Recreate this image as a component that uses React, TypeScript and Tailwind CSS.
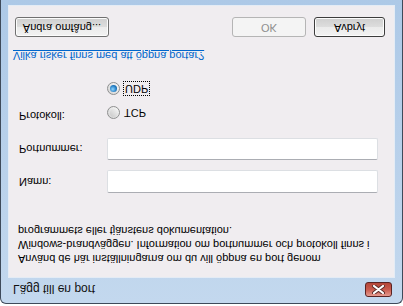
import React from "react";

const font = { fontFamily: '"Liberation Sans", Arial, sans-serif' };

const Radio = ({ checked }: { checked?: boolean }) => (
  <span className="relative w-[13px] h-[13px] rounded-full border border-[#8e8f8f] bg-gradient-to-br from-[#d4d4d4] to-[#f8f8f8] flex items-center justify-center">
    {checked ? (
      <span className="w-[7px] h-[7px] rounded-full bg-[radial-gradient(circle_at_40%_40%,#8fd6ff,#1e78c0_60%,#0e4f8a)]" />
    ) : (
      <span className="w-[8px] h-[8px] rounded-full bg-gradient-to-br from-[#c8c8c8] to-[#f4f4f4]" />
    )}
  </span>
);

const VButton = ({
  children,
  w,
  disabled,
  def,
}: {
  children: React.ReactNode;
  w: string;
  disabled?: boolean;
  def?: boolean;
}) => (
  <div
    className={`${w} h-[20px] rounded-[3px] border flex items-center justify-center text-[11px] ${
      disabled
        ? "border-[#b5b5b5] bg-[#f4f4f4] text-[#8d8d8d]"
        : def
        ? "border-[#3c3c3c] bg-[linear-gradient(#f2f2f2_0%,#ebebeb_50%,#dddddd_50%,#cfcfcf_100%)] text-black shadow-[inset_0_0_0_1px_#fcfcfc]"
        : "border-[#707070] bg-[linear-gradient(#f2f2f2_0%,#ebebeb_50%,#dddddd_50%,#cfcfcf_100%)] text-black shadow-[inset_0_0_0_1px_#fcfcfc]"
    }`}
  >
    {children}
  </div>
);

export default function App() {
  return (
    <div className="w-[403px] h-[306px] overflow-hidden bg-white [transform:scaleY(-1)]" style={font}>
      <div className="mt-[2px] h-[304px] rounded-t-[6px] border-x border-t border-[#3e4a5a] bg-gradient-to-b from-[#c3d8ee] to-[#adc9e7] flex flex-col px-[7px] pb-[5px]">
        {/* title bar */}
        <div className="h-[25px] flex items-center justify-between pl-[5px] pr-[3px] pt-[3px]">
          <span className="text-[12px] text-[#111]">Lägg till en port</span>
          <div className="w-[27px] h-[15px] rounded-[3px] border border-[#5a2323] bg-gradient-to-b from-[#e49a8f] via-[#c95a4d] to-[#b24638] flex items-center justify-center mb-[1px]">
            <svg width="13" height="9" viewBox="0 0 13 9">
              <path d="M2 1 L11 8 M11 1 L2 8" stroke="#5b2b28" strokeWidth="4" strokeLinecap="round" />
              <path d="M2 1 L11 8 M11 1 L2 8" stroke="#fff" strokeWidth="2.2" strokeLinecap="round" />
            </svg>
          </div>
        </div>

        {/* content */}
        <div className="flex-1 bg-[#f0edf0] border border-[#e4ecf5] flex flex-col pl-[9px] pr-[16px] text-[11px] text-black">
          <div className="pt-[11px] leading-[14px]">
            <p>Använd de här inställningarna om du vill öppna en port genom</p>
            <p>Windows-brandväggen. Information om portnummer och protokoll finns i</p>
            <p>programmets eller tjänstens dokumentation.</p>
          </div>

          <div className="mt-[31px] flex items-center h-[23px]">
            <span className="w-[89px] pl-[1px]">Namn:</span>
            <div className="flex-1 h-[23px] bg-white border border-[#dcdfe3] border-t-[#abadb3] rounded-[2px]" />
          </div>

          <div className="mt-[10px] flex items-center h-[22px]">
            <span className="w-[89px] pl-[1px]">Portnummer:</span>
            <div className="flex-1 h-[22px] bg-white border border-[#dcdfe3] border-t-[#abadb3] rounded-[2px]" />
          </div>

          <div className="mt-[13px] flex">
            <span className="w-[89px] pl-[1px] pt-[1px]">Protokoll:</span>
            <div className="flex flex-col">
              <div className="h-[24px] flex items-center gap-[4px]">
                <Radio />
                <span>TCP</span>
              </div>
              <div className="h-[24px] flex items-center gap-[3px]">
                <Radio checked />
                <span className="border border-dotted border-black px-[1px] leading-[13px]">UDP</span>
              </div>
            </div>
          </div>

          <div className="mt-[13px] ml-[-5px]">
            <span className="text-[#0066cc] underline">Vilka risker finns med att öppna portar?</span>
          </div>

          <div className="mt-[10px] flex items-center">
            <div className="ml-[-3px]">
              <VButton w="w-[94px]">Ändra omfång...</VButton>
            </div>
            <div className="ml-auto flex gap-[8px] mr-[-7px]">
              <VButton w="w-[74px]" disabled>
                OK
              </VButton>
              <VButton w="w-[71px]" def>
                Avbryt
              </VButton>
            </div>
          </div>
        </div>
      </div>
    </div>
  );
}
